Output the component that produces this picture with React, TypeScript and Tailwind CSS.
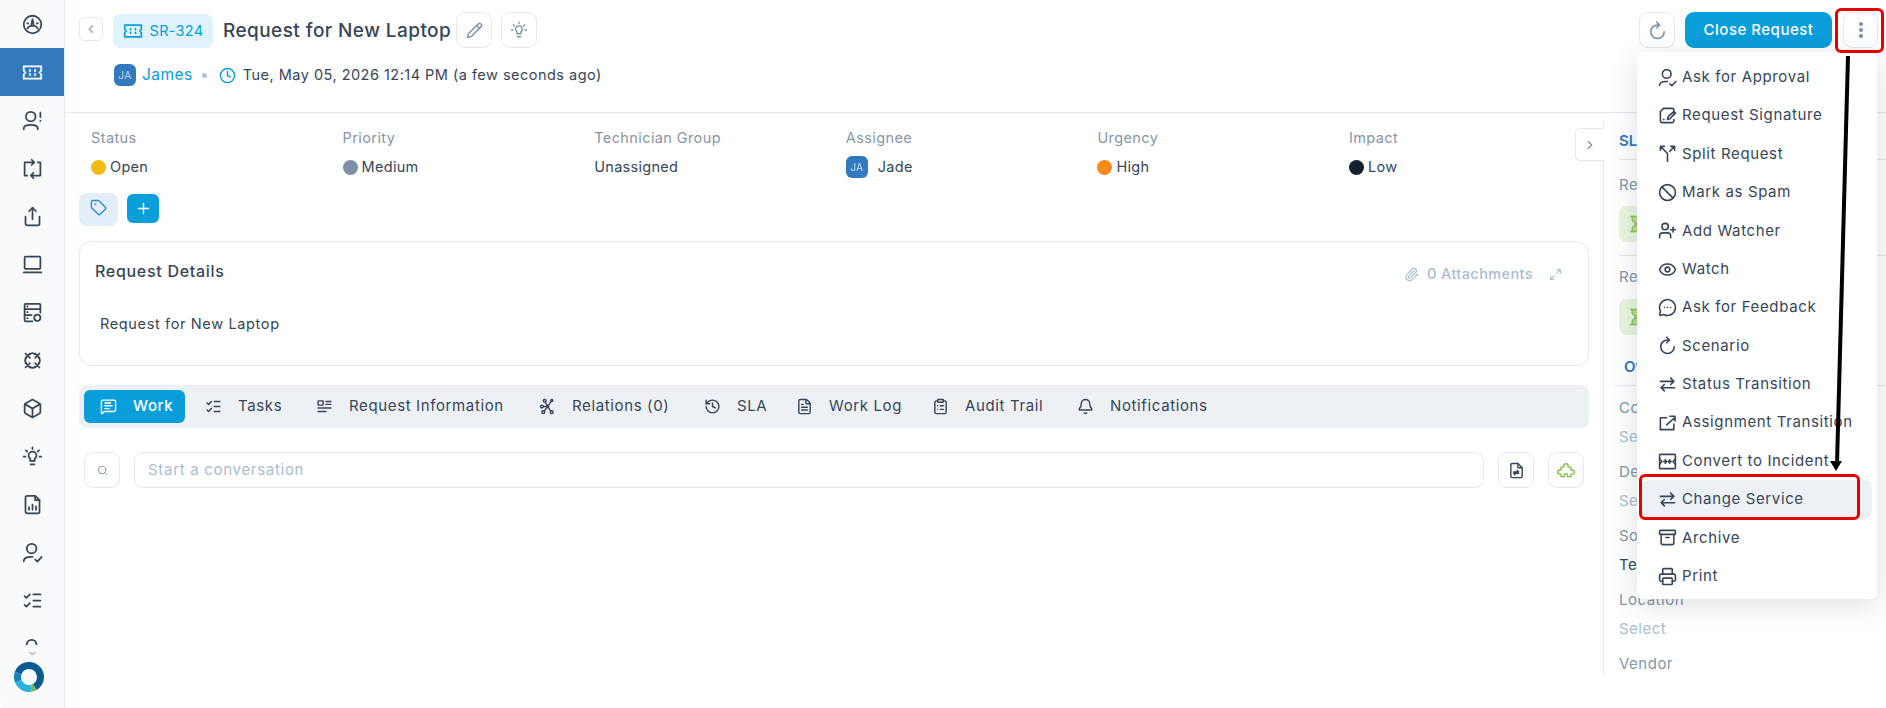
import React from 'react';
import { Box, Share, ListChecks, ChevronLeft, ChevronRight, ChevronDown, Plus, Tag, Pencil, Clock, Paperclip, Search, Eye, Ban, Archive, Printer, Bell, ClipboardList, History, FileText, MessageSquareText, UserPlus, MessageCircleMore, Hourglass } from 'lucide-react';

type IconProps = { size?: number; className?: string; sw?: number };

const Svg = ({ size = 24, className = '', sw = 2, children }: IconProps & { children: React.ReactNode }) => (
  <svg width={size} height={size} viewBox="0 0 24 24" fill="none" stroke="currentColor" strokeWidth={sw} strokeLinecap="round" strokeLinejoin="round" className={className}>
    {children}
  </svg>
);

const TicketIcon = (p: IconProps) => (
  <Svg {...p}>
    <path d="M2 5h20v5l-2 2 2 2v5H2v-5l2-2-2-2z" />
    <path d="M9 9v1.500M9 13.500V15M15 9v1.500M15 13.500V15" />
  </Svg>
);

const GaugeIcon = (p: IconProps) => (
  <Svg {...p}>
    <circle cx="12" cy="12" r="10" />
    <path d="M12 6l1.500 7.500h-3zM6 16.500c2-3 4-3 4.500-3M18 16.500c-2-3-4-3-4.500-3M6 10.500l1 .5M18 10.500l-1 .5" />
  </Svg>
);

const UserAlertIcon = (p: IconProps) => (
  <Svg {...p}>
    <circle cx="10" cy="7.500" r="5.500" />
    <path d="M2 22v-1c0-2.500 3-4 8-4s8 1.500 8 4v1M21 3v5M21 12v.5" />
  </Svg>
);

const SwapSquareIcon = (p: IconProps) => (
  <Svg {...p}>
    <path d="M3 20V5h11M11 2l3 3-3 3M18 5h3v15H10M13 17l-3 3 3 3M3 20h3" />
  </Svg>
);

const LaptopIcon = (p: IconProps) => (
  <Svg {...p}>
    <rect x="3" y="3" width="18" height="14" rx="1" />
    <path d="M2 21h20" />
  </Svg>
);

const ServerCogIcon = (p: IconProps) => (
  <Svg {...p}>
    <path d="M12 22H4a1 1 0 0 1-1-1V3a1 1 0 0 1 1-1h16a1 1 0 0 1 1 1v9" />
    <path d="M3 8h18M3 15h8M6 5h.5M6 11.500h.5M6 18.500h.5" />
    <circle cx="17.500" cy="18" r="3.500" />
  </Svg>
);

const BadgeGearIcon = (p: IconProps) => (
  <Svg {...p}>
    <path d="M9 5Q12 2 15 5M19 9Q22 12 19 15M15 19Q12 22 9 19M5 15Q2 12 5 9" />
    <path d="M4 4l5 5M9 4 4 9M15 4l5 5M20 4l-5 5M15 15l5 5M20 15l-5 5M4 15l5 5M9 15l-5 5" />
  </Svg>
);

const BulbIcon = (p: IconProps) => (
  <Svg {...p}>
    <path d="M12 1.500v2M4.500 5l1.500 1.500M19.500 5 18 6.500M2 12h2M20 12h2" />
    <path d="M9.500 17v-2.500C8 13.500 7.500 12 7.500 11a4.500 4.500 0 0 1 9 0c0 1-.5 2.500-2 3.500V17z" />
    <path d="M10 21h4" />
  </Svg>
);

const FileChartIcon = (p: IconProps) => (
  <Svg {...p}>
    <path d="M6 2h9l5 5v13a2 2 0 0 1-2 2H6a2 2 0 0 1-2-2V4a2 2 0 0 1 2-2z" />
    <path d="M15 2v5h5M8 18v-3M12 18v-6M16 18v-4" />
  </Svg>
);

const UserCheckIcon = (p: IconProps) => (
  <Svg {...p}>
    <circle cx="11" cy="7.500" r="5.500" />
    <path d="M2 22c0-3.500 3-5 8-5h2M15 20l2.500 2.500L22.500 17" />
  </Svg>
);

const SignatureIcon = (p: IconProps) => (
  <Svg {...p}>
    <path d="M20 9V5a2 2 0 0 0-2-2H7L3 7v12a2 2 0 0 0 2 2h13a2 2 0 0 0 2-2v-2" />
    <path d="M12 17l1-4 7-6 2 2-7 7zM7 17h.5" />
  </Svg>
);

const SplitIcon = (p: IconProps) => (
  <Svg {...p}>
    <path d="M3 3h5M3 3v5M3 3l9 9v10M21 3h-5M21 3v5M21 3l-6 6" />
  </Svg>
);

const RefreshIcon = (p: IconProps) => (
  <Svg {...p}>
    <path d="M20.500 13.500A8.500 8.500 0 1 1 12 5h2" />
    <path d="M11 1.500 14.500 5 11 8.500" />
  </Svg>
);

const SwapIcon = ({ size, className, strokeWidth }: IconProps & { strokeWidth?: number }) => (
  <Svg size={size} className={className} sw={strokeWidth}>
    <path d="M3 8h17M16 4l4 4-4 4M21 16H4M8 12l-4 4 4 4" />
  </Svg>
);

const ShareBoxIcon = (p: IconProps) => (
  <Svg {...p}>
    <path d="M11 6H3v15h17v-7" />
    <path d="M11 15l10-9M15 4h6.500v6" />
  </Svg>
);

const ConvertIcon = (p: IconProps) => (
  <Svg {...p}>
    <rect x="2" y="3" width="20" height="18" rx="1" />
    <path d="M2 8.500 5 12l-3 3.500M22 8.500 19 12l3 3.500" />
    <path d="M7 12h3M9 10l2 2-2 2M17 12h-3M15 10l-2 2 2 2" />
  </Svg>
);

const NodesIcon = (p: IconProps) => (
  <Svg {...p}>
    <circle cx="8" cy="4" r="2" />
    <circle cx="18" cy="3.500" r="1.500" />
    <circle cx="4" cy="12" r="2" />
    <circle cx="12" cy="12" r="1.500" />
    <circle cx="6" cy="20" r="2" />
    <circle cx="18" cy="20" r="2" />
    <path d="M9 6l3 5M17 5l-4 6M6 12h4.500M7.500 18.500l3.500-5M16.500 18.500 13 13" />
  </Svg>
);

const InfoListIcon = (p: IconProps) => (
  <Svg {...p}>
    <rect x="3" y="4" width="7" height="6" />
    <path d="M14 5h7M14 9h7M3 14h18M3 19h11" />
  </Svg>
);

const ExpandIcon = (p: IconProps) => (
  <Svg {...p}>
    <path d="M15 3h6v6M21 3l-7 7M3 15v6h6M3 21l7-7" />
  </Svg>
);

const PuzzleIcon = (p: IconProps) => (
  <Svg {...p}>
    <path d="M9.500 7a2.500 2.500 0 1 1 5 0v1.500H18V12h1.500a2.500 2.500 0 0 1 0 5H18v3h-4v-1.500a2 2 0 0 0-4 0V20H6v-3H4.500a2.500 2.500 0 0 1 0-5H6V8.500h3.500z" />
  </Svg>
);

const FileSwapIcon = (p: IconProps) => (
  <Svg {...p}>
    <path d="M14 2H6a2 2 0 0 0-2 2v16a2 2 0 0 0 2 2h12a2 2 0 0 0 2-2V8z" />
    <path d="M14 2v6h6M8 14h7M13 12l2 2M8 16h7M10 18l-2-2" />
  </Svg>
);

const LogoIcon = () => (
  <svg width="30" height="30" viewBox="0 0 30 30" fill="none" strokeWidth="7">
    <path d="M4.190 11.070A11.500 11.500 0 1 1 20.750 24.960" stroke="#0b5a90" />
    <path d="M20.750 24.960A11.500 11.500 0 0 1 17 26.330" stroke="#6cbb55" />
    <path d="M17 26.330A11.500 11.500 0 0 1 4.190 18.930" stroke="#27b5dd" />
    <path d="M4.190 18.930A11.500 11.500 0 0 1 4.190 11.070" stroke="#1a7fc0" />
  </svg>
);

const sideItems: { icon: React.ComponentType<IconProps>; active?: boolean }[] = [
  { icon: GaugeIcon },
  { icon: TicketIcon, active: true },
  { icon: UserAlertIcon },
  { icon: SwapSquareIcon },
  { icon: Share as any },
  { icon: LaptopIcon },
  { icon: ServerCogIcon },
  { icon: BadgeGearIcon },
  { icon: Box as any },
  { icon: BulbIcon },
  { icon: FileChartIcon },
  { icon: UserCheckIcon },
  { icon: ListChecks as any },
  { icon: UserCheckIcon },
];

const menuItems: { label: string; icon: any; active?: boolean }[] = [
  { label: 'Ask for Approval', icon: UserCheckIcon },
  { label: 'Request Signature', icon: SignatureIcon },
  { label: 'Split Request', icon: SplitIcon },
  { label: 'Mark as Spam', icon: Ban },
  { label: 'Add Watcher', icon: UserPlus },
  { label: 'Watch', icon: Eye },
  { label: 'Ask for Feedback', icon: MessageCircleMore },
  { label: 'Scenario', icon: RefreshIcon },
  { label: 'Status Transition', icon: SwapIcon },
  { label: 'Assignment Transition', icon: ShareBoxIcon },
  { label: 'Convert to Incident', icon: ConvertIcon },
  { label: 'Change Service', icon: SwapIcon, active: true },
  { label: 'Archive', icon: Archive },
  { label: 'Print', icon: Printer },
];

const tabs: { label: string; icon: any; w: string; active?: boolean }[] = [
  { label: 'Work', icon: MessageSquareText, w: 'w-[101px] mr-[4px]', active: true },
  { label: 'Tasks', icon: ListChecks, w: 'w-[111px]' },
  { label: 'Request Information', icon: InfoListIcon, w: 'w-[223px]' },
  { label: 'Relations (0)', icon: NodesIcon, w: 'w-[165px]' },
  { label: 'SLA', icon: History, w: 'w-[92px]' },
  { label: 'Work Log', icon: FileText, w: 'w-[136px]' },
  { label: 'Audit Trail', icon: ClipboardList, w: 'w-[145px]' },
  { label: 'Notifications', icon: Bell, w: 'w-[160px]' },
];

const Dot = ({ color }: { color: string }) => <span className={`w-[15px] h-[15px] rounded-full ${color}`}></span>;

const Avatar = () => (
  <span className="w-[22px] h-[22px] rounded-[6px] bg-[#3279be] text-[#c5d9ed] text-[10px] flex items-center justify-center">JA</span>
);

const Field = ({ label, children }: { label: string; children: React.ReactNode }) => (
  <div className="w-[251.600px] shrink-0">
    <p className="text-[#8596a8] text-[14.500px] tracking-[0.4px] leading-[20px]">{label}</p>
    <div className="mt-[8px] h-[22px] flex items-center gap-[4px] text-[#364658] text-[14.500px] tracking-[0.3px]">{children}</div>
  </div>
);

const SideField = ({ label, value, dark }: { label: string; value?: string; dark?: boolean }) => (
  <div className="mb-[15px]">
    <p className="text-[#8596a8] text-[15px] tracking-[0.5px] leading-[20px] whitespace-nowrap">{label}</p>
    {value && <p className={`mt-[9px] text-[15px] tracking-[0.5px] leading-[20px] whitespace-nowrap ${dark ? 'text-[#364658]' : 'text-[#a9bdd3]'}`}>{value}</p>}
  </div>
);

export default function App() {
  return (
    <div className="relative flex h-screen w-screen overflow-hidden bg-white text-[#364658] font-['Inter',sans-serif]">
      {/* Sidebar */}
      <aside className="w-[65px] shrink-0 flex flex-col bg-[#f8fafc] border-r border-[#e2e8f0] rounded-bl-lg">
        <div className="h-[645px] overflow-hidden">
          {sideItems.map((item, i) => (
            <div key={i} className={`h-12 flex items-center justify-center ${item.active ? 'bg-[#3279be] text-white' : 'text-[#364658]'}`}>
              <item.icon size={21} sw={2} />
            </div>
          ))}
        </div>
        <ChevronDown size={11} className="text-[#64748b] ml-[27px] mt-[3px]" />
        <div className="ml-[14px] mt-[3px]">
          <LogoIcon />
        </div>
      </aside>

      {/* Main */}
      <div className="flex-1 min-w-0 flex flex-col">
        <header className="h-[113px] shrink-0 border-b border-[#e2e8f0] pl-[14px] pr-[8px] pt-[12px]">
          <div className="flex items-start">
            <button className="mt-[5px] w-[24px] h-[24px] rounded-[5px] border border-[#e2e8f0] flex items-center justify-center text-[#94a3b8]">
              <ChevronLeft size={14} />
            </button>
            <div className="ml-[10px] mt-[2px] w-[100px] h-[34px] rounded-[7px] bg-[#e0f2fb] flex items-center justify-center gap-[7px] text-[#099dd9] text-[14.500px] tracking-[0.3px]">
              <TicketIcon size={20} sw={2} />
              <span>SR-324</span>
            </div>
            <h1 className="ml-[10px] mt-[5px] text-[19px] tracking-[0.43px] leading-[28px] font-medium whitespace-nowrap w-[233px]">Request for New Laptop</h1>
            <button className="w-[36px] h-[36px] rounded-[9px] border border-[#e2e8f0] flex items-center justify-center text-[#7b8fa5]">
              <Pencil size={17} />
            </button>
            <button className="ml-[9px] w-[36px] h-[36px] rounded-[9px] border border-[#e2e8f0] flex items-center justify-center text-[#7b8fa5]">
              <BulbIcon size={18} sw={1.8} />
            </button>
            <div className="ml-auto flex items-center gap-[10px]">
              <button className="w-[36px] h-[36px] rounded-[9px] border border-[#e2e8f0] flex items-center justify-center text-[#7b8fa5]">
                <RefreshIcon size={19} />
              </button>
              <button className="w-[147px] h-[36px] rounded-[9px] bg-[#099dd9] text-white text-[15px] tracking-[0.5px] font-medium">Close Request</button>
              <button className="ml-[1px] w-[35px] h-[36px] rounded-[9px] border border-[#e2e8f0] flex flex-col items-center justify-center gap-[2px]">
                <span className="w-[4px] h-[4px] rounded-full bg-[#7b8fa5]"></span>
                <span className="w-[4px] h-[4px] rounded-full bg-[#7b8fa5]"></span>
                <span className="w-[4px] h-[4px] rounded-full bg-[#7b8fa5]"></span>
              </button>
            </div>
          </div>
          <div className="mt-[16px] ml-[35px] flex items-center text-[14.500px] tracking-[0.48px] h-[22px]">
            <Avatar />
            <span className="ml-[6px] text-[15.500px] text-[#099dd9]">James</span>
            <span className="ml-[9px] w-[5px] h-[5px] rounded-full bg-[#b6c4d4]"></span>
            <Clock size={17} className="ml-[12px] text-[#099dd9]" />
            <span className="ml-[7px] whitespace-nowrap">Tue, May 05, 2026 12:14 PM (a few seconds ago)</span>
          </div>
        </header>

        <div className="flex-1 flex min-h-0">
          <main className="w-[1538px] shrink-0 pl-[14px] pr-[14px]">
            <div className="pt-[15px] pl-[12px] flex">
              <Field label="Status"><Dot color="bg-[#f5b914]" /><span>Open</span></Field>
              <Field label="Priority"><Dot color="bg-[#7e8fa6]" /><span>Medium</span></Field>
              <Field label="Technician Group"><span>Unassigned</span></Field>
              <Field label="Assignee"><Avatar /><span className="ml-[6px]">Jade</span></Field>
              <Field label="Urgency"><Dot color="bg-[#f88a1c]" /><span>High</span></Field>
              <Field label="Impact"><Dot color="bg-[#16212e]" /><span>Low</span></Field>
            </div>
            <div className="mt-[15px] flex items-start gap-[9px]">
              <div className="w-[39px] h-[33px] rounded-[8px] bg-[#e3eef8] flex items-center justify-center text-[#2b8fd0]">
                <Tag size={17} className="-mt-[4px]" />
              </div>
              <button className="mt-[1px] w-[32px] h-[29px] rounded-[6px] bg-[#099dd9] text-white flex items-center justify-center">
                <Plus size={17} />
              </button>
            </div>

            {/* Request details */}
            <section className="mt-[15px] h-[125px] rounded-[12px] border border-[#e2e8f0] pl-[15px] pr-[26px] pt-[18px]">
              <div className="flex items-center h-[22px]">
                <h2 className="text-[16px] tracking-[0.7px] font-medium">Request Details</h2>
                <div className="ml-auto mt-[6px] flex items-center text-[#a9bdd3] text-[14.500px] tracking-[0.4px] font-medium">
                  <Paperclip size={15} />
                  <span className="ml-[8px]">0 Attachments</span>
                  <ExpandIcon size={13} className="ml-[16px]" />
                </div>
              </div>
              <p className="mt-[32px] ml-[5px] text-[14.500px] tracking-[0.64px] leading-[20px]">Request for New Laptop</p>
            </section>

            {/* Tabs */}
            <nav className="mt-[19px] h-[43px] rounded-[8px] bg-[#edf0f5] px-[5px] flex items-center">
              {tabs.map(t => (
                <div key={t.label} className={`${t.w} shrink-0 h-[33px] flex items-center pl-[16px] text-[15px] tracking-[0.63px] rounded-[6px] ${t.active ? 'bg-[#099dd9] text-white font-medium' : 'text-[#364658]'}`}>
                  <t.icon size={17} className="shrink-0" />
                  <span className="ml-[16px] whitespace-nowrap">{t.label}</span>
                </div>
              ))}
            </nav>

            {/* Conversation */}
            <div className="mt-[24px] ml-[5px] mr-[5px] flex items-center">
              <button className="w-[36px] h-[36px] rounded-[9px] border border-[#e2e8f0] flex items-center justify-center text-[#7b8fa5]">
                <Search size={11} />
              </button>
              <div className="ml-[14px] flex-1 h-[36px] rounded-[9px] border border-[#e2e8f0] flex items-center pl-[13px] text-[15px] tracking-[0.7px] text-[#a9bdd3]">Start a conversation</div>
              <button className="ml-[14px] w-[36px] h-[36px] rounded-[9px] border border-[#e2e8f0] flex items-center justify-center text-[#364658]">
                <FileSwapIcon size={17} />
              </button>
              <button className="ml-[14px] w-[36px] h-[36px] rounded-[9px] border border-[#e2e8f0] flex items-center justify-center text-[#7cc242]">
                <PuzzleIcon size={20} sw={1.6} />
              </button>
            </div>
          </main>

          {/* Right panel */}
          <aside className="mt-[9px] mb-[33px] flex-1 min-w-0 border-l border-[#e2e8f0] pl-[15px] overflow-hidden">
            <div className="h-[38px] border-b border-[#e2e8f0] pt-[8px] text-[15px] font-semibold text-[#3279be]">SLA</div>
            <div className="pt-[15px] h-[96px] border-b border-[#e2e8f0]">
              <p className="text-[15px] tracking-[0.5px] text-[#8596a8] leading-[20px]">Response Due</p>
              <div className="mt-[11px] h-[36px] w-[200px] rounded-[8px] bg-[#e9f4df] text-[#8dc455] pl-[8px] flex items-center"><Hourglass size={18} fill="#8dc455" fillOpacity={0.5} /></div>
            </div>
            <div className="pt-[11px]">
              <p className="text-[15px] tracking-[0.5px] text-[#8596a8] leading-[20px]">Resolution Due</p>
              <div className="mt-[12px] h-[36px] w-[200px] rounded-[8px] bg-[#e9f4df] text-[#8dc455] pl-[8px] flex items-center"><Hourglass size={18} fill="#8dc455" fillOpacity={0.5} /></div>
            </div>
            <div className="-ml-[5px] mt-[21px] pl-[10px] h-[30px] border-b border-[#e2e8f0] text-[15px] font-semibold text-[#3279be]">Overview</div>
            <div className="pt-[12px]">
              <SideField label="Company" value="Select" />
              <SideField label="Department" value="Select" />
              <SideField label="Source" value="Technician Portal" dark />
              <SideField label="Location" value="Select" />
              <SideField label="Vendor" />
            </div>
          </aside>
        </div>
      </div>

      {/* Chevron tab over the side panel edge */}
      <button className="absolute left-[1575px] top-[128px] w-[29px] h-[33px] rounded-l-[5px] border border-r-0 border-[#e2e8f0] bg-white flex items-center justify-center text-[#7b8fa5]">
        <ChevronRight size={14} />
      </button>

      {/* Actions menu */}
      <div className="absolute left-[1637px] top-[52px] w-[240px] h-[547px] rounded-[6px] bg-white shadow-[0_6px_28px_rgba(30,50,80,0.16)] pt-[6px] px-[5px]">
        {menuItems.map(m => (
          <div key={m.label} className={`h-[38.400px] flex items-center pl-[16px] rounded-[8px] ${m.active ? 'bg-[#edf0f5]' : ''}`}>
            <m.icon size={19} strokeWidth={2} className="shrink-0 text-[#364658]" />
            <span className="ml-[5px] text-[15px] tracking-[0.63px] whitespace-nowrap text-[#364658]">{m.label}</span>
          </div>
        ))}
      </div>

      {/* Annotations */}
      <div className="absolute left-[1835px] top-[8px] w-[49px] h-[45px] rounded-[6px] border-[3px] border-[#e60000]"></div>
      <div className="absolute left-[1639px] top-[474px] w-[221px] h-[46px] rounded-[6px] border-[3px] border-[#e60000]"></div>
      <svg className="absolute left-0 top-0 pointer-events-none" width="1886" height="708">
        <path d="M1848 56 1837 464" stroke="#000" strokeWidth="4" />
        <path d="M1830 461h12l-6 10z" fill="#000" />
      </svg>
    </div>
  );
}
